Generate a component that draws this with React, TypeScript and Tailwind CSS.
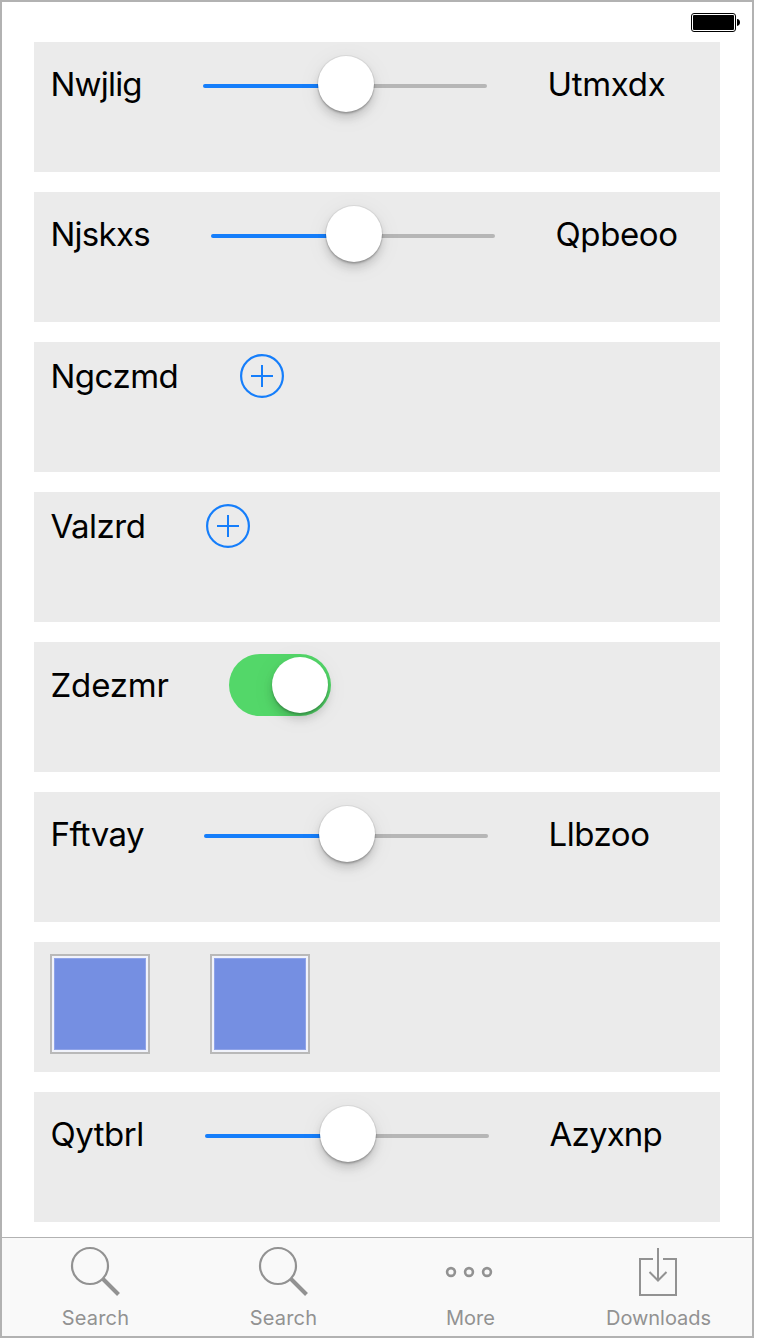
import type { ReactNode } from "react";

function Row({ children }: { children: ReactNode }) {
  return (
    <section className="flex h-[130px] items-start bg-[#ebebeb] pt-3 pl-4">
      <div className="flex items-center gap-[60px]">{children}</div>
    </section>
  );
}

function Label({ text, className }: { text: string; className: string }) {
  return (
    <span className={`block pl-[0.5px] whitespace-nowrap text-[33px] leading-10 text-black ${className}`}>
      {text}
    </span>
  );
}

function Slider() {
  return (
    <div className="relative flex h-[60px] w-[284px] items-center pt-1">
      <div className="h-1 w-1/2 rounded-l-full bg-[#157efb]" />
      <div className="h-1 w-1/2 rounded-r-full bg-[#b6b6b6]" />
      <div className="absolute top-0.5 left-[115px] size-14 rounded-full bg-white shadow-[0_0_0_1px_rgba(0,0,0,0.06),0_2px_2px_rgba(0,0,0,0.2),0_6px_10px_rgba(0,0,0,0.15),0_4px_26px_rgba(0,0,0,0.06)]" />
    </div>
  );
}

function AddButton() {
  return (
    <button className="block size-11" aria-label="Add">
      <svg width="44" height="44" viewBox="0 0 44 44" fill="none" stroke="#157efb" strokeWidth="2">
        <circle cx="22" cy="22" r="20.9" strokeWidth="2.2" />
        <path d="M11 22h22M22 11v22" />
      </svg>
    </button>
  );
}

function Switch() {
  return (
    <div className="flex h-[62px] w-[102px] items-center justify-end rounded-full bg-[#53d769] pr-[3px]">
      <div className="size-14 rounded-full bg-white shadow-[0_2px_2px_rgba(0,0,0,0.2),0_6px_10px_rgba(0,0,0,0.15),0_4px_26px_rgba(0,0,0,0.06)]" />
    </div>
  );
}

function Swatch() {
  return (
    <div className="size-[100px] border-2 border-[#b9b9b9] bg-[#f1f3fb] p-0.5">
      <div className="size-full border border-[#8fa3e8] bg-[#758fe2]" />
    </div>
  );
}

function Tab({ label, className, children }: { label: string; className: string; children: ReactNode }) {
  return (
    <div className={`flex flex-col items-center ${className}`}>
      <svg width="60" height="60" viewBox="0 0 60 60" fill="none" stroke="#929292" strokeWidth="2">
        {children}
      </svg>
      <span className="mt-2 block whitespace-nowrap pl-px text-[20px] leading-6 text-[#929292]">
        {label}
      </span>
    </div>
  );
}

function SearchIcon() {
  return (
    <>
      <circle cx="25" cy="28" r="18" strokeWidth="2.2" />
      <path d="M38 41l15.5 15.5" strokeWidth="4" />
    </>
  );
}

export default function App() {
  return (
    <div className="h-[1340px] w-[760px] bg-white font-['Inter',sans-serif]">
      <div className="flex h-[1338px] w-[754px] flex-col border-2 border-[#b2b2b2] bg-white">
        <header className="flex h-10 justify-end pt-[11px] pr-3">
          <svg width="49" height="19" viewBox="0 0 49 19">
            <rect x="0.5" y="0.5" width="44" height="18" rx="2.5" fill="none" stroke="#000" />
            <rect x="2" y="2" width="41" height="15" rx="1" fill="#000" />
            <path d="M46 6a3.5 3.5 0 0 1 3 3.5A3.5 3.5 0 0 1 46 13z" fill="#000" />
          </svg>
        </header>
        <main className="flex h-[1195px] flex-col gap-5 px-8">
          <Row>
            <Label text="Nwjlig" className="w-[93px] tracking-[-0.8px]" />
            <Slider />
            <Label text="Utmxdx" className="w-[120px] tracking-[-0.3px]" />
          </Row>
          <Row>
            <Label text="Njskxs" className="w-[101px] tracking-[-0.75px]" />
            <Slider />
            <Label text="Qpbeoo" className="w-[124px] tracking-[-0.4px]" />
          </Row>
          <Row>
            <Label text="Ngczmd" className="w-[130px] tracking-[-0.5px]" />
            <AddButton />
          </Row>
          <Row>
            <Label text="Valzrd" className="w-[96px] tracking-[-0.5px]" />
            <AddButton />
          </Row>
          <Row>
            <Label text="Zdezmr" className="w-[119px] tracking-[-0.15px]" />
            <Switch />
          </Row>
          <Row>
            <Label text="Fftvay" className="w-[94px] tracking-[-0.6px]" />
            <Slider />
            <Label text="Llbzoo" className="w-[103px] tracking-[-0.45px]" />
          </Row>
          <Row>
            <Swatch />
            <Swatch />
          </Row>
          <Row>
            <Label text="Qytbrl" className="w-[95px] tracking-[-0.5px]" />
            <Slider />
            <Label text="Azyxnp" className="w-[114px] tracking-[-0.8px]" />
          </Row>
        </main>
        <nav className="flex h-[99px] border-t border-[#b2b2b2] bg-[#f9f9f9]">
          <Tab label="Search" className="w-[186px] tracking-[0.15px]">
            <SearchIcon />
          </Tab>
          <Tab label="Search" className="w-[190px] tracking-[0.15px]">
            <SearchIcon />
          </Tab>
          <Tab label="More" className="w-[186px] pr-[2px] tracking-[0px]">
            <circle cx="11" cy="34" r="3.9" strokeWidth="2.6" />
            <circle cx="29" cy="34" r="3.9" strokeWidth="2.6" />
            <circle cx="47" cy="34" r="3.9" strokeWidth="2.6" />
          </Tab>
          <Tab label="Downloads" className="w-[188px] tracking-[-0.05px]">
            <path d="M25 21H12v36h36V21H35M30 10v32M21.5 34l8.5 8.5 8.5-8.5" />
          </Tab>
        </nav>
      </div>
    </div>
  );
}
